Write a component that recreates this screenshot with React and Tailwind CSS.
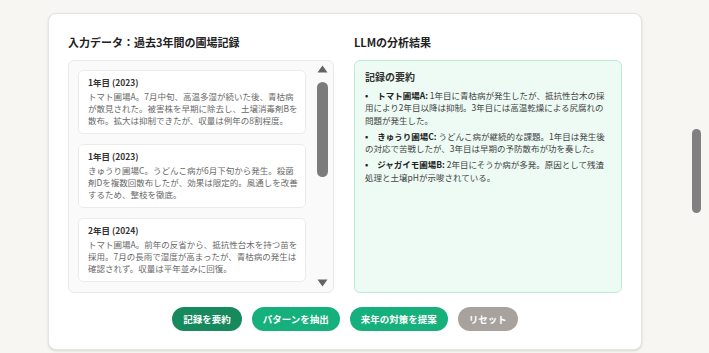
const records = [
  {
    title: "1年目 (2023)",
    lines: [
      "トマト圃場A。7月中旬、高温多湿が続いた後、青枯病",
      "が散見された。被害株を早期に除去し、土壌消毒剤Bを",
      "散布。拡大は抑制できたが、収量は例年の8割程度。",
    ],
  },
  {
    title: "1年目 (2023)",
    lines: [
      "きゅうり圃場C。うどんこ病が6月下旬から発生。殺菌",
      "剤Dを複数回散布したが、効果は限定的。風通しを改善",
      "するため、整枝を徹底。",
    ],
  },
  {
    title: "2年目 (2024)",
    lines: [
      "トマト圃場A。前年の反省から、抵抗性台木を持つ苗を",
      "採用。7月の長雨で湿度が高まったが、青枯病の発生は",
      "確認されず。収量は平年並みに回復。",
    ],
  },
];

const summary = [
  {
    label: "トマト圃場A:",
    lines: [
      " 1年目に青枯病が発生したが、抵抗性台木の採",
      "用により2年目以降は抑制。3年目には高温乾燥による尻腐れの",
      "問題が発生した。",
    ],
  },
  {
    label: "きゅうり圃場C:",
    lines: [
      " うどんこ病が継続的な課題。1年目は発生後",
      "の対応で苦戦したが、3年目は早期の予防散布が功を奏した。",
    ],
  },
  {
    label: "ジャガイモ圃場B:",
    lines: [" 2年目にそうか病が多発。原因として残渣", "処理と土壌pHが示唆されている。"],
  },
];

const buttons = [
  { label: "記録を要約", cls: "bg-[#168a5c]" },
  { label: "パターンを抽出", cls: "bg-[#15b07b]" },
  { label: "来年の対策を提案", cls: "bg-[#15b07b]" },
  { label: "リセット", cls: "bg-[#a8a29e]" },
];

function Triangle({ down }) {
  return (
    <svg width="11" height="8" viewBox="0 0 11 8" className="mx-auto">
      {down ? (
        <path d="M0.5 0.5 H10.5 L5.5 7.5 Z" fill="#636363" />
      ) : (
        <path d="M5.5 0.5 L10.5 7.5 H0.5 Z" fill="#636363" />
      )}
    </svg>
  );
}

export default function App() {
  return (
    <div
      className="h-screen overflow-hidden bg-[#f8f6f3] pl-[48px] pt-[13px]"
      style={{ fontFamily: '"Noto Sans CJK JP", "Noto Sans", sans-serif' }}
    >
      <div className="h-[337px] w-[594px] rounded-lg border border-[#e6e4e1] bg-white px-[19px] pt-[20px] shadow-sm">
        <div className="grid grid-cols-[266px_268px] gap-x-[20px]">
          {/* left column */}
          <div>
            <h2 className="mb-[10px] text-[11px] font-bold leading-[16px] text-[#222]">
              入力データ：過去3年間の圃場記録
            </h2>
            <div className="flex h-[233px] overflow-hidden rounded-md border border-[#e9e9e9] bg-[#fafafa]">
              <div className="flex-1 overflow-hidden pl-[9px] pt-[9px]">
                <div className="flex w-[228px] flex-col gap-[10px]">
                  {records.map((r, i) => (
                    <div
                      key={i}
                      className="rounded-[5px] border border-[#ebebeb] bg-white px-[9px] pb-[7px] pt-[5px]"
                    >
                      <div className="text-[8.5px] font-bold leading-[13px] text-[#333]">{r.title}</div>
                      <div className="mt-[1px] text-[8.5px] leading-[12px] text-[#6a6a6a]">
                        {r.lines.map((l, j) => (
                          <div key={j} className="whitespace-nowrap">
                            {l}
                          </div>
                        ))}
                      </div>
                    </div>
                  ))}
                </div>
              </div>
              <div className="flex w-[19px] flex-col pr-[2px] pt-[4px] pb-[5px]">
                <Triangle />
                <div className="mx-auto mt-[9px] h-[95px] w-[11px] rounded-full bg-[#7b7b7b]" />
                <div className="mt-auto">
                  <Triangle down />
                </div>
              </div>
            </div>
          </div>

          {/* right column */}
          <div>
            <h2 className="mb-[10px] text-[11px] font-bold leading-[16px] text-[#222]">LLMの分析結果</h2>
            <div className="h-[233px] rounded-md border border-[#b8ecd4] bg-[#edfbf4] px-[10px] pt-[9px]">
              <h3 className="text-[10px] font-bold leading-[14px] text-[#333]">記録の要約</h3>
              <ul className="mt-[5px] flex flex-col gap-[4px] text-[8.5px] leading-[12.3px] text-[#444]">
                {summary.map((s, i) => (
                  <li key={i}>
                    {s.lines.map((l, j) => (
                      <div key={j} className="whitespace-nowrap">
                        {j === 0 && (
                          <>
                            <span className="mr-[9px] font-bold text-[#222]">•</span>
                            <span className="font-bold text-[#222]">{s.label}</span>
                          </>
                        )}
                        {l}
                      </div>
                    ))}
                  </li>
                ))}
              </ul>
            </div>
          </div>
        </div>

        <div className="mt-[14px] flex justify-center gap-[10px]">
          {buttons.map((b) => (
            <button
              key={b.label}
              className={`h-[24px] rounded-full px-[11px] text-[9.5px] font-bold leading-[24px] text-white ${b.cls}`}
            >
              {b.label}
            </button>
          ))}
        </div>
      </div>

      {/* window scrollbar thumb */}
      <div className="fixed right-[8px] top-[129px] h-[84px] w-[9px] rounded-full bg-[#808080]" />
    </div>
  );
}
